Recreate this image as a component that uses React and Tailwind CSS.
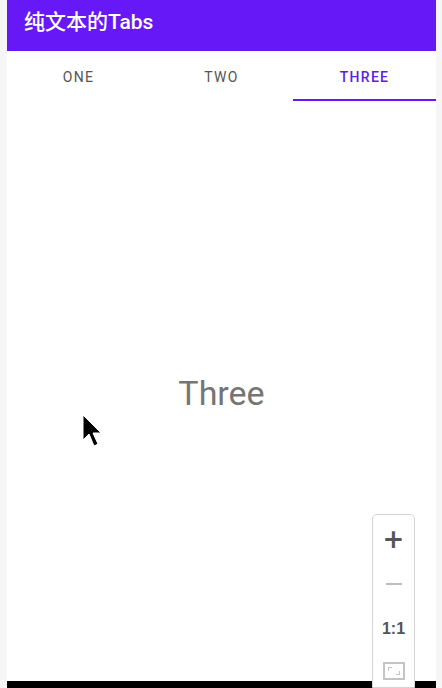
import React from 'react';

const tabs = ['ONE', 'TWO', 'THREE'];

const Cursor = () => (
  <svg width="22" height="34" viewBox="0 0 22 34" className="absolute left-[75px] top-[312px]">
    <path d="M1 1 L1 26 L7 20 L12 32 L16 30 L11 19 L19 19 Z" fill="#000" stroke="#fff" strokeWidth="1" />
  </svg>
);

const ZoomPanel = () => (
  <div className="absolute left-[372px] top-[514px] w-[43px] h-[174px] bg-white border border-[#d4d4d4] rounded-t-[5px] flex flex-col items-center pt-[12px]">
    <div className="h-[24px] flex items-center justify-center text-[#555] text-[26px] leading-none font-bold" style={{ fontFamily: '"DejaVu Sans", sans-serif' }}>+</div>
    <div className="h-[20px] mt-[23px] flex items-center justify-center">
      <div className="w-[16px] h-[2px] bg-[#bdbdbd]" />
    </div>
    <div className="mt-[27px] text-[16px] font-bold text-[#555] leading-none" style={{ fontFamily: '"Liberation Sans", sans-serif' }}>1:1</div>
    <div className="mt-[25px] w-[22px] h-[18px] border-2 border-[#c4c4c4] relative">
      <div className="absolute left-[3px] top-[3px] w-[4px] h-[4px] border-l border-t border-[#c4c4c4]" />
      <div className="absolute right-[3px] bottom-[3px] w-[4px] h-[4px] border-r border-b border-[#c4c4c4]" />
    </div>
  </div>
);

export default function App() {
  return (
    <div className="w-[442px] h-[688px] bg-[#f6f6f6] flex pl-[7px] pr-[6px] relative overflow-hidden" style={{ fontFamily: 'Roboto, "Noto Sans CJK SC", sans-serif' }}>
      <div className="w-[429px] flex flex-col">
        {/* app bar */}
        <div className="h-[51px] bg-[#6619f6] flex items-center pl-[17px] shrink-0">
          <span className="text-white text-[21px] font-medium mt-[-6px]">纯文本的Tabs</span>
        </div>
        {/* tabs */}
        <div className="h-[51px] bg-white flex shrink-0">
          {tabs.map((t, i) => (
            <div key={t} className="flex-1 flex flex-col">
              <div className={`flex-1 flex items-center justify-center pt-[4px] text-[14px] tracking-[1.3px] ${i === 2 ? 'text-[#5a22e0] font-medium' : 'text-[#555]'}`}>
                {t}
              </div>
              <div className={`h-[2px] mb-[1px] ${i === 2 ? 'bg-[#6619f6]' : 'bg-transparent'}`} />
            </div>
          ))}
        </div>
        {/* content */}
        <div className="flex-1 bg-white flex items-center justify-center relative">
          <span className="text-[34px] text-[#757575] mt-[4px]">Three</span>
          <Cursor />
        </div>
        <div className="h-[7px] bg-black shrink-0" />
      </div>
      <ZoomPanel />
    </div>
  );
}
